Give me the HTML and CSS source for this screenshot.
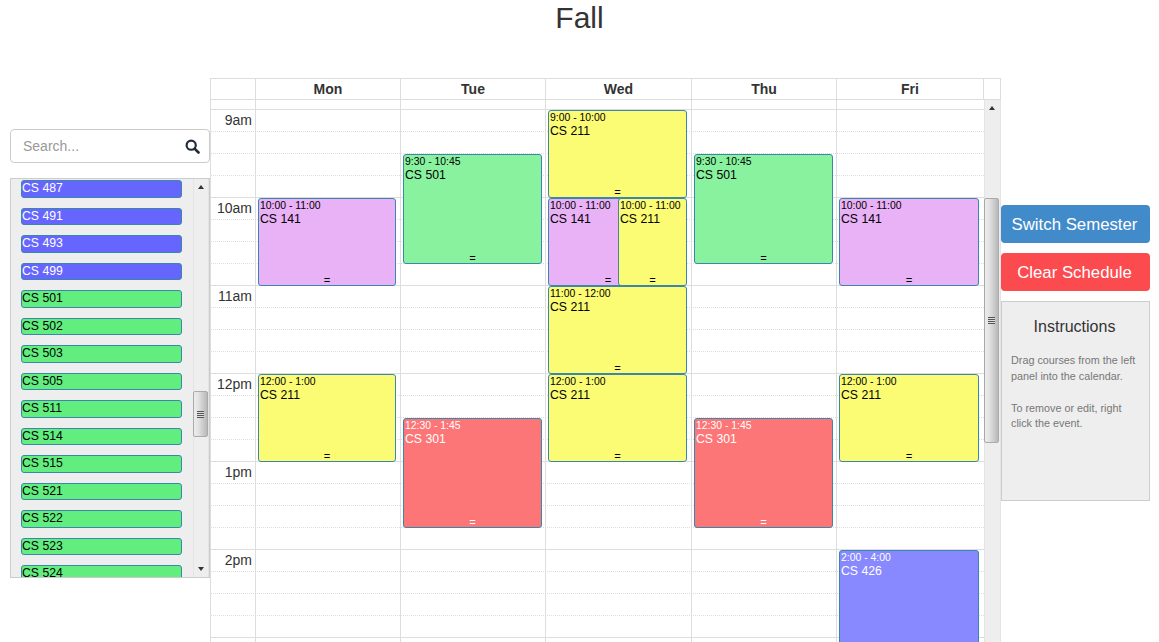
FILE: index.html
```html
<!doctype html>
<html lang="en">
  <head>
    <meta charset="UTF-8" />
    <meta name="viewport" content="width=device-width, initial-scale=1.0" />
    <title>Fall Schedule</title>
    <link rel="stylesheet" href="styles.css">
  </head>
  <body>
    <h1 class="semester">Fall</h1>

    <div class="planner">
      <div class="sidebar">
        <div class="search">
          <input class="search-input" type="text" placeholder="Search...">
          <svg class="search-icon" viewBox="0 0 16 16" width="15" height="15">
            <circle cx="6.6" cy="6.6" r="4.9" fill="none" stroke="#222b38" stroke-width="2.3" />
            <path d="M10.2 10.2L14.4 14.4" stroke="#222b38" stroke-width="2.8" stroke-linecap="round" />
          </svg>
        </div>

        <div class="course-list">
          <div class="course-items">
            <div class="course grad-4">CS 487</div>
            <div class="course grad-4">CS 491</div>
            <div class="course grad-4">CS 493</div>
            <div class="course grad-4">CS 499</div>
            <div class="course grad-5">CS 501</div>
            <div class="course grad-5">CS 502</div>
            <div class="course grad-5">CS 503</div>
            <div class="course grad-5">CS 505</div>
            <div class="course grad-5">CS 511</div>
            <div class="course grad-5">CS 514</div>
            <div class="course grad-5">CS 515</div>
            <div class="course grad-5">CS 521</div>
            <div class="course grad-5">CS 522</div>
            <div class="course grad-5">CS 523</div>
            <div class="course grad-5">CS 524</div>
          </div>
          <div class="scrollbar list-scrollbar">
            <span class="arrow-up"></span>
            <span class="thumb"><span class="grip"></span></span>
            <span class="arrow-down"></span>
          </div>
        </div>
      </div>

      <div class="calendar">
        <div class="cal-head">
          <div class="head-cell time-cell"></div>
          <div class="head-cell">Mon</div>
          <div class="head-cell">Tue</div>
          <div class="head-cell">Wed</div>
          <div class="head-cell">Thu</div>
          <div class="head-cell">Fri</div>
          <div class="head-cell scroll-cell"></div>
        </div>

        <div class="cal-body">
          <div class="cal-scroll">
            <div class="all-day">
              <div></div><div></div><div></div><div></div><div></div><div></div>
            </div>

            <div class="week">
              <div class="slots">
                <div class="slot"></div><div class="slot"></div><div class="slot"></div><div class="slot hour"></div>
                <div class="slot"></div><div class="slot"></div><div class="slot"></div><div class="slot hour"></div>
                <div class="slot"></div><div class="slot"></div><div class="slot"></div><div class="slot hour"></div>
                <div class="slot"></div><div class="slot"></div><div class="slot"></div><div class="slot hour"></div>
                <div class="slot"></div><div class="slot"></div><div class="slot"></div><div class="slot hour"></div>
                <div class="slot"></div><div class="slot"></div><div class="slot"></div><div class="slot hour"></div>
                <div class="slot"></div><div class="slot"></div><div class="slot"></div><div class="slot hour"></div>
              </div>

              <div class="times">
                <div class="time">9am</div>
                <div class="time">10am</div>
                <div class="time">11am</div>
                <div class="time">12pm</div>
                <div class="time">1pm</div>
                <div class="time">2pm</div>
              </div>

              <div class="day day-first">
                <div class="event purple" style="grid-row: 5 / span 4"><div class="event-time">10:00 - 11:00</div><div class="event-title">CS 141</div><div class="resizer">=</div></div>
                <div class="event yellow" style="grid-row: 13 / span 4"><div class="event-time">12:00 - 1:00</div><div class="event-title">CS 211</div><div class="resizer">=</div></div>
              </div>

              <div class="day">
                <div class="event green" style="grid-row: 3 / span 5"><div class="event-time">9:30 - 10:45</div><div class="event-title">CS 501</div><div class="resizer">=</div></div>
                <div class="event red" style="grid-row: 15 / span 5"><div class="event-time">12:30 - 1:45</div><div class="event-title">CS 301</div><div class="resizer">=</div></div>
              </div>

              <div class="day day-split">
                <div class="event yellow whole" style="grid-row: 1 / span 4"><div class="event-time">9:00 - 10:00</div><div class="event-title">CS 211</div><div class="resizer">=</div></div>
                <div class="event purple left" style="grid-row: 5 / span 4"><div class="event-time">10:00 - 11:00</div><div class="event-title">CS 141</div><div class="resizer">=</div></div>
                <div class="event yellow right" style="grid-row: 5 / span 4"><div class="event-time">10:00 - 11:00</div><div class="event-title">CS 211</div><div class="resizer">=</div></div>
                <div class="event yellow whole" style="grid-row: 9 / span 4"><div class="event-time">11:00 - 12:00</div><div class="event-title">CS 211</div><div class="resizer">=</div></div>
                <div class="event yellow whole" style="grid-row: 13 / span 4"><div class="event-time">12:00 - 1:00</div><div class="event-title">CS 211</div><div class="resizer">=</div></div>
              </div>

              <div class="day">
                <div class="event green" style="grid-row: 3 / span 5"><div class="event-time">9:30 - 10:45</div><div class="event-title">CS 501</div><div class="resizer">=</div></div>
                <div class="event red" style="grid-row: 15 / span 5"><div class="event-time">12:30 - 1:45</div><div class="event-title">CS 301</div><div class="resizer">=</div></div>
              </div>

              <div class="day day-last">
                <div class="event purple" style="grid-row: 5 / span 4"><div class="event-time">10:00 - 11:00</div><div class="event-title">CS 141</div><div class="resizer">=</div></div>
                <div class="event yellow" style="grid-row: 13 / span 4"><div class="event-time">12:00 - 1:00</div><div class="event-title">CS 211</div><div class="resizer">=</div></div>
                <div class="event blue" style="grid-row: 21 / span 8"><div class="event-time">2:00 - 4:00</div><div class="event-title">CS 426</div></div>
              </div>
            </div>
          </div>

          <div class="scrollbar cal-scrollbar">
            <span class="arrow-up"></span>
            <span class="thumb"><span class="grip"></span></span>
          </div>
        </div>
      </div>

      <div class="actions">
        <button class="btn btn-blue" type="button">Switch Semester</button>
        <button class="btn btn-red" type="button">Clear Schedule</button>
        <div class="instructions">
          <h2>Instructions</h2>
          <p>Drag courses from the left panel into the calendar.</p>
          <p>To remove or edit, right click the event.</p>
        </div>
      </div>
    </div>
  </body>
</html>
```

FILE: styles.css
```css
html,
body {
  height: 642px;
  overflow: hidden;
}
body {
  margin: 0;
  font-family: "Liberation Sans", Arial, sans-serif;
  font-size: 14px;
  color: #333;
  background-color: #fff;
}
.semester {
  margin: 0;
  height: 78px;
  padding-top: 1px;
  box-sizing: border-box;
  font-size: 30px;
  font-weight: 500;
  line-height: 33px;
  text-align: center;
}
.planner {
  display: flex;
  align-items: flex-start;
  padding-left: 10px;
}

/* left panel */
.sidebar {
  width: 200px;
  padding-top: 51px;
  flex-shrink: 0;
}
.search {
  display: flex;
  align-items: center;
  height: 34px;
  box-sizing: border-box;
  border: 1px solid #ccc;
  border-radius: 4px;
  padding: 0 9px 0 12px;
}
.search-input {
  flex: 1;
  min-width: 0;
  border: 0;
  outline: 0;
  padding: 0;
  font-family: inherit;
  font-size: 14px;
  color: #555;
}
.search-input::placeholder {
  color: #999;
  opacity: 1;
}
.course-list {
  display: flex;
  height: 400px;
  margin-top: 15px;
  box-sizing: border-box;
  border: 1px solid #ccc;
  background-color: #eee;
  overflow: hidden;
}
.course-items {
  flex: 1;
  padding: 1px 0 0 10px;
  overflow: hidden;
}
.course {
  height: 17.5px;
  width: 161px;
  margin-bottom: 10px;
  box-sizing: border-box;
  border: 1px solid #3a87ad;
  border-radius: 3px;
  font-size: 12.25px;
  line-height: 15px;
}
.grad-4 {
  background-color: #6666ff;
  color: #fff;
}
.grad-5 {
  background-color: #62ee7f;
  color: #000;
}

/* scrollbars */
.scrollbar {
  position: relative;
  width: 17px;
  flex-shrink: 0;
  box-sizing: border-box;
  background-color: #eee;
  border-left: 1px solid #e4e4e4;
  border-right: 1px solid #e4e4e4;
}
.arrow-up,
.arrow-down {
  position: absolute;
  left: 4px;
  width: 0;
  height: 0;
  border-left: 3.5px solid transparent;
  border-right: 3.5px solid transparent;
}
.arrow-up {
  top: 6px;
  border-bottom: 4px solid #333;
}
.arrow-down {
  bottom: 6px;
  border-top: 4px solid #333;
}
.thumb {
  position: absolute;
  left: -1px;
  width: 15px;
  box-sizing: border-box;
  display: flex;
  align-items: center;
  justify-content: center;
  border: 1px solid #aaa;
  border-radius: 2px;
  background: linear-gradient(to right, #ececec, #e4e4e4 30%, #b8b8b8);
}
.grip {
  width: 7px;
  height: 7px;
  background: repeating-linear-gradient(to bottom, #555 0, #555 1px, #ddd 1px, #ddd 2px);
}
.list-scrollbar {
  width: 16px;
}
.list-scrollbar .thumb {
  top: 212px;
  height: 46px;
}
.cal-scrollbar {
  height: 542px;
}
.cal-scrollbar .thumb {
  top: 98px;
  height: 245px;
}

/* calendar */
.calendar {
  width: 791px;
  flex-shrink: 0;
}
.cal-head {
  display: flex;
  height: 22px;
  box-sizing: border-box;
  border-top: 1px solid #ddd;
  border-bottom: 1px solid #ddd;
  border-left: 1px solid #ddd;
}
.head-cell {
  width: 145px;
  box-sizing: border-box;
  border-right: 1px solid #ddd;
  font-weight: bold;
  line-height: 20px;
  text-align: center;
}
.head-cell:nth-child(4) {
  width: 146px;
}
.head-cell:nth-child(6) {
  width: 147px;
}
.time-cell {
  width: 45px;
}
.scroll-cell {
  width: 17px;
}
.cal-body {
  display: flex;
  height: 542px;
  overflow: hidden;
}
.cal-scroll {
  width: 774px;
  box-sizing: border-box;
  border-left: 1px solid #ddd;
}
.all-day {
  display: grid;
  grid-template-columns: 45px 145px 145px 146px 145px 147px;
  height: 10px;
  box-sizing: border-box;
  border-bottom: 1px solid #ddd;
}
.all-day div {
  border-right: 1px solid #ddd;
}
.all-day div:last-child {
  border-right: 0;
}
.week {
  display: grid;
  grid-template-columns: 45px 145px 145px 146px 145px 147px;
  grid-template-rows: 616px;
}
.slots {
  grid-row: 1;
  grid-column: 1 / -1;
}
.slot {
  height: 22px;
  box-sizing: border-box;
  border-bottom: 1px dotted #ddd;
}
.slot.hour {
  border-bottom: 1px solid #ddd;
}
.times {
  grid-row: 1;
  grid-column: 1;
  border-right: 1px solid #ddd;
}
.time {
  height: 88px;
  padding-right: 3px;
  text-align: right;
  line-height: 21px;
}
.day {
  grid-row: 1;
  display: grid;
  grid-template-rows: repeat(28, 22px);
  grid-template-columns: 1fr;
  padding: 0 3px 0 2px;
  border-right: 1px solid #ddd;
}
.day:nth-child(3) { grid-column: 2; }
.day:nth-child(4) { grid-column: 3; }
.day:nth-child(5) { grid-column: 4; }
.day:nth-child(6) { grid-column: 5; }
.day:nth-child(7) { grid-column: 6; }
.day-first {
  padding-right: 4px;
}
.day-last {
  padding-right: 5px;
  border-right: 0;
}
.day-split {
  grid-template-columns: 70px 50px 19px;
}
.whole {
  grid-column: 1 / -1;
}
.left {
  grid-column: 1 / 3;
}
.right {
  grid-column: 2 / 4;
}

/* events */
.event {
  display: flex;
  flex-direction: column;
  min-width: 0;
  box-sizing: border-box;
  border: 1px solid #3a87ad;
  border-radius: 3px;
  padding: 0 1px;
  font-size: 12.25px;
  color: #000;
  overflow: hidden;
}
.event-time {
  font-size: 10.41px;
  line-height: 13px;
  white-space: nowrap;
}
.event-title {
  line-height: 14px;
  white-space: nowrap;
}
.resizer {
  margin-top: auto;
  height: 8px;
  font-family: "Liberation Mono", monospace;
  font-size: 11px;
  line-height: 8px;
  text-align: center;
}
.purple { background-color: #e9b1f6; }
.yellow { background-color: #fbfb74; }
.green { background-color: #88f29e; }
.red {
  background-color: #fc7677;
  color: #fff;
}
.blue {
  background-color: #8888ff;
  color: #fff;
}

/* right panel */
.actions {
  width: 149px;
  padding-top: 127px;
  flex-shrink: 0;
}
.btn {
  display: block;
  width: 149px;
  height: 38px;
  margin-bottom: 10px;
  border: 0;
  border-radius: 4px;
  padding: 1px 2px 0 0;
  font-family: inherit;
  font-size: 16.8px;
  color: #fff;
}
.btn-blue {
  background-color: #428bca;
}
.btn-red {
  background-color: #fb4b4f;
}
.instructions {
  height: 200px;
  margin-top: 10px;
  box-sizing: border-box;
  border: 1px solid #ccc;
  background-color: #eee;
  padding: 0 9px;
}
.instructions h2 {
  margin: 16px 2px 17px 0;
  font-size: 16px;
  font-weight: normal;
  line-height: 18px;
  text-align: center;
}
.instructions p {
  margin: 0 0 16px;
  font-size: 10.8px;
  line-height: 15.75px;
  color: #777;
}
```
